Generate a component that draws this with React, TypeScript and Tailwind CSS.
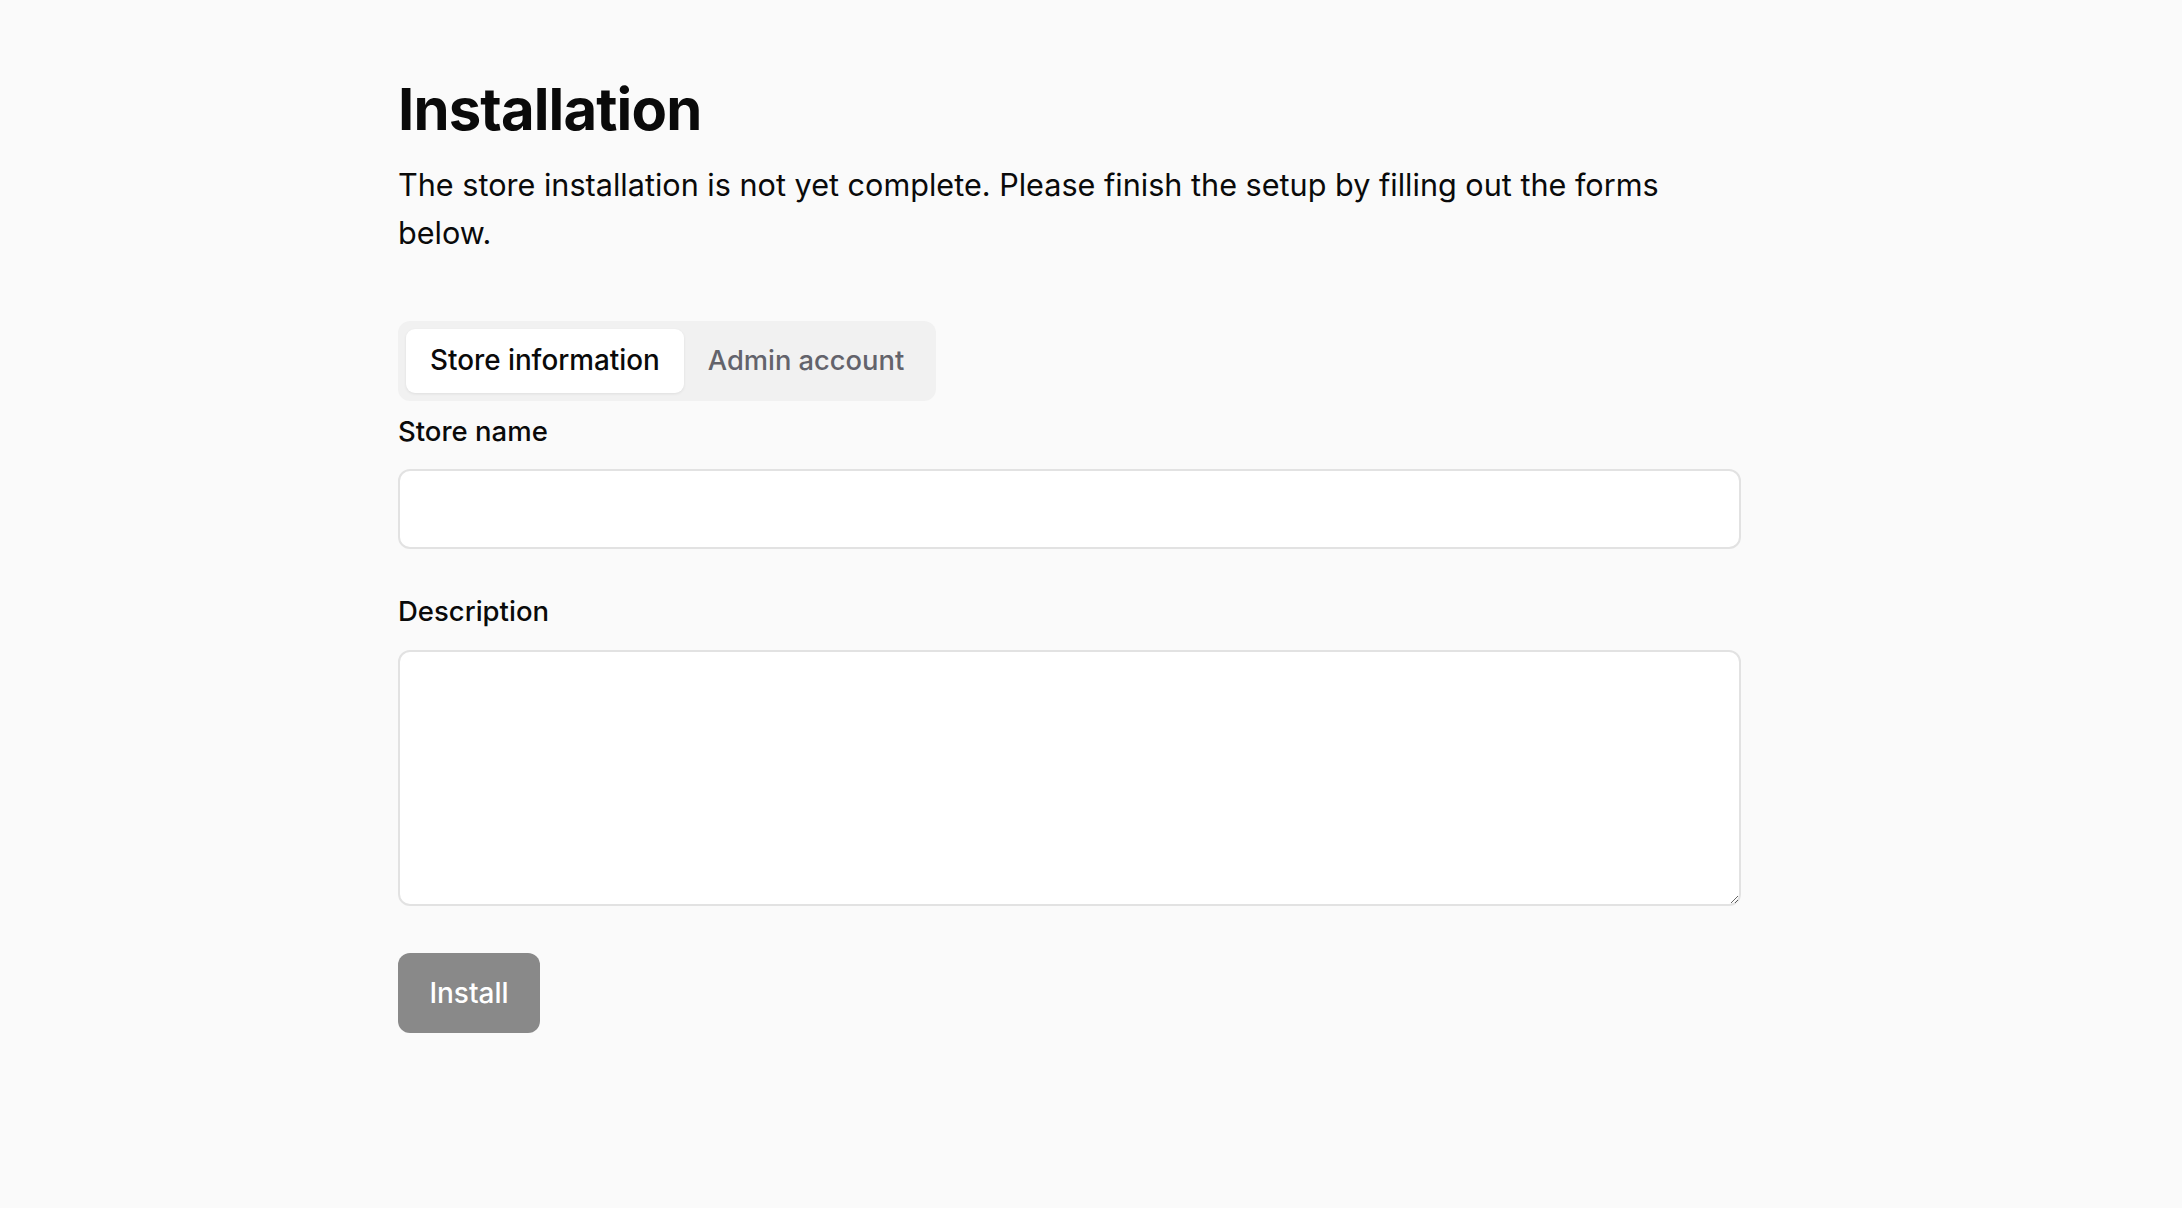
import React, { useState } from "react";

export default function App() {
  const [tab, setTab] = useState<"store" | "admin">("store");
  return (
    <div className="min-h-screen bg-[#fafafa] pl-[398px] pt-[76px] font-[Inter,'Noto_Sans',sans-serif] text-[#0a0a0a]">
      <div className="w-[1343px] flex flex-col">
        <h1 className="text-[58px] leading-[66px] font-bold tracking-[-0.015em]">Installation</h1>
        <p className="mt-[19px] w-[1320px] text-[30.6px] leading-[48px]">
          The store installation is not yet complete. Please finish the setup by filling out the forms below.
        </p>

        <div className="mt-[64px] self-start flex items-center p-[8px] rounded-[12px] bg-[#f1f1f1]">
          <button
            onClick={() => setTab("store")}
            className={
              "h-[64px] px-[24px] rounded-[9px] text-[27.8px] font-medium " +
              (tab === "store"
                ? "bg-white text-[#0a0a0a] shadow-[0_1px_3px_rgba(0,0,0,0.08)]"
                : "text-[#63636b]")
            }
          >
            Store information
          </button>
          <button
            onClick={() => setTab("admin")}
            className={
              "h-[64px] px-[24px] rounded-[9px] text-[27.3px] font-medium " +
              (tab === "admin"
                ? "bg-white text-[#0a0a0a] shadow-[0_1px_3px_rgba(0,0,0,0.08)]"
                : "text-[#63636b]")
            }
          >
            Admin account
          </button>
        </div>

        <label className="mt-[10px] text-[27.5px] leading-[40px] font-medium">Store name</label>
        <input
          type="text"
          className="mt-[18px] h-[80px] w-full rounded-[12px] border-2 border-[#e2e2e2] bg-white px-[18px] text-[27px] outline-none"
        />

        <label className="mt-[42px] text-[27.5px] leading-[40px] font-medium">Description</label>
        <textarea className="mt-[19px] h-[256px] w-full rounded-[12px] border-2 border-[#e2e2e2] bg-white px-[18px] py-[12px] text-[27px] outline-none" />

        <button className="mt-[47px] self-start h-[80px] w-[142px] rounded-[12px] bg-[#898989] text-white text-[28px] font-medium">
          Install
        </button>
      </div>
    </div>
  );
}
